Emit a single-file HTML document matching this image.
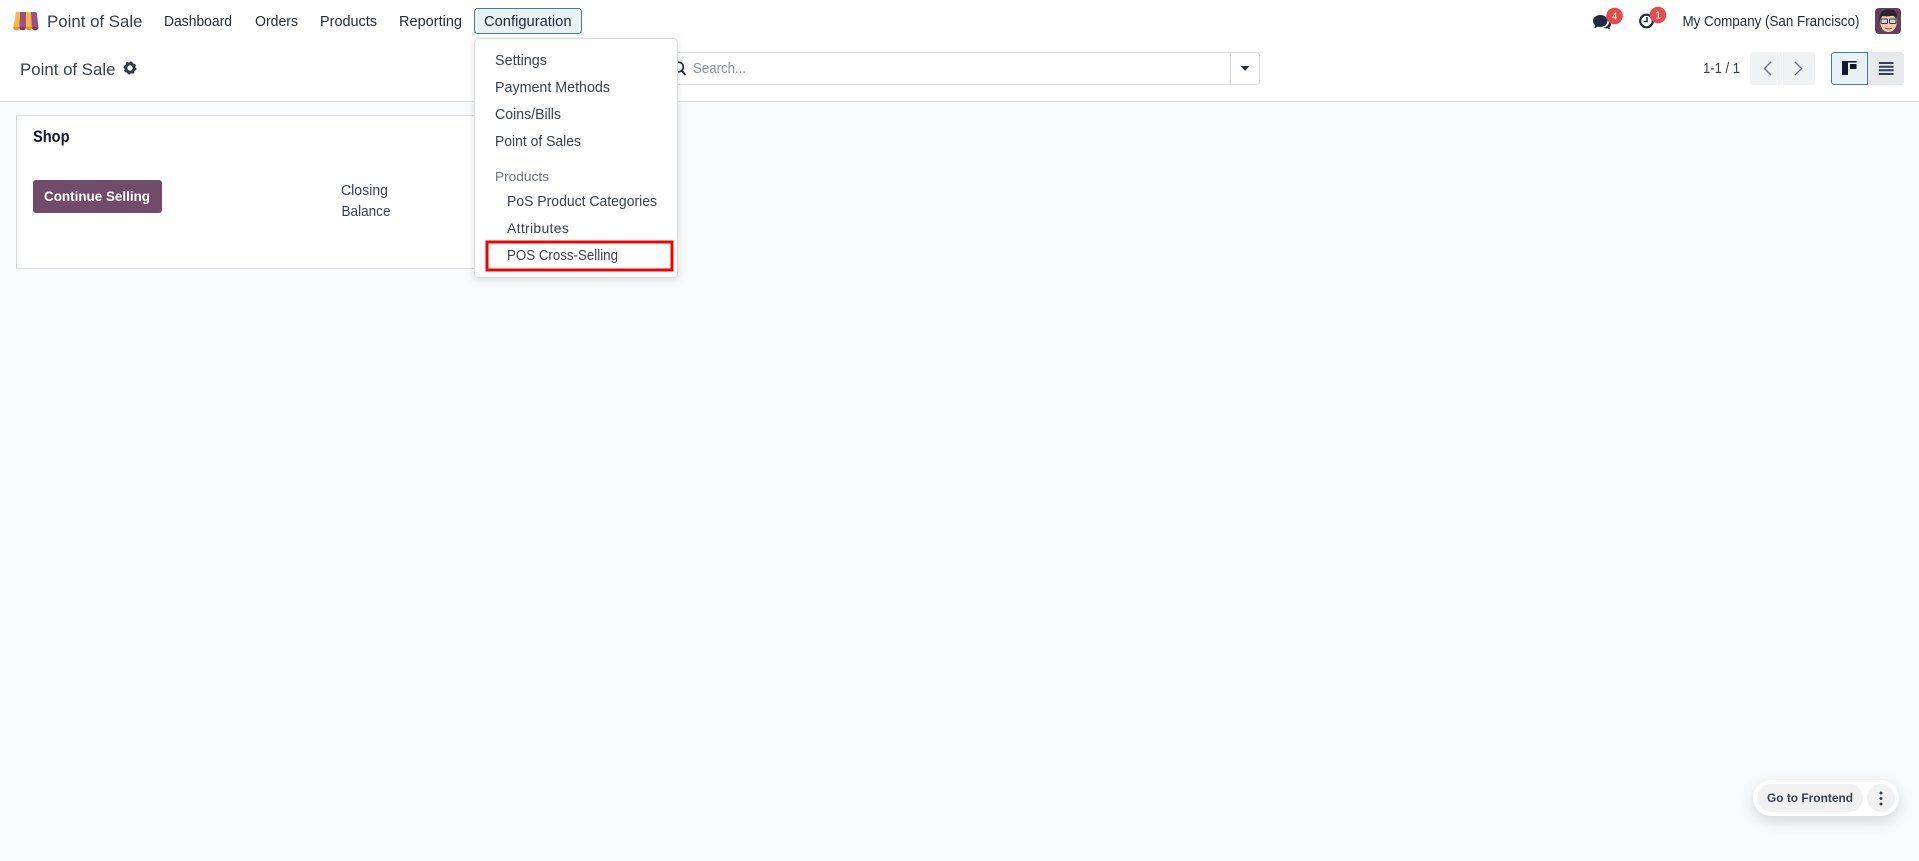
<!DOCTYPE html>
<html>
<head>
<meta charset="utf-8">
<title>Point of Sale</title>
<style>
html,body{margin:0;padding:0;width:1919px;height:861px;overflow:hidden;background:#f9fafb}
svg{display:block;position:absolute;left:0;top:0}
text{font-family:"Liberation Sans",sans-serif;font-size:14.5px;fill:#374151}
.d{fill:#1f2937}
</style>
</head>
<body>
<svg width="1919" height="861" viewBox="0 0 1919 861" xmlns="http://www.w3.org/2000/svg">
<defs>
<filter id="ms" x="-20%" y="-20%" width="140%" height="140%"><feDropShadow dx="0" dy="2" stdDeviation="4" flood-color="#000" flood-opacity=".12"/></filter>
<filter id="fs" x="-30%" y="-60%" width="160%" height="260%"><feDropShadow dx="0" dy="5" stdDeviation="7" flood-color="#000" flood-opacity=".14"/></filter>
</defs>
<rect width="1919" height="861" fill="#f9fafb"/>
<rect width="1919" height="101" fill="#fff"/>
<rect y="101" width="1919" height="1" fill="#d8dadd"/>

<!-- logo -->
<path d="M16 12h4l-.7 16H13.300z" fill="#f4b942"/>
<path d="M20 12h6v16h-6.700z" fill="#9b4f83"/>
<path d="M26 12h5l.7 16H26z" fill="#f4b942"/>
<path d="M31 12h4.500c.8 0 1.200.5 1.400 1.200L38.500 28h-6.800z" fill="#9b4f83"/>
<path d="M13.300 27h6v.5a3 2.800 0 0 1-6 0zM25.800 27h6v.5a3 2.800 0 0 1-6 0z" fill="#e98b1f"/>
<path d="M19.300 27h6.500v.5a3.200 2.800 0 0 1-6.500 0zM31.800 27h6.700v.5a3.300 2.800 0 0 1-6.700 0z" fill="#7d3a68"/>

<!-- navbar -->
<text x="47" y="27" style="font-size:17px" textLength="95.500" lengthAdjust="spacingAndGlyphs">Point of Sale</text>
<text class="d" x="164" y="26" textLength="68" lengthAdjust="spacingAndGlyphs">Dashboard</text>
<text class="d" x="255" y="26" textLength="43" lengthAdjust="spacingAndGlyphs">Orders</text>
<text class="d" x="320" y="26" textLength="57" lengthAdjust="spacingAndGlyphs">Products</text>
<text class="d" x="399" y="26" textLength="63" lengthAdjust="spacingAndGlyphs">Reporting</text>
<rect x="474.500" y="8.500" width="107" height="25" rx="3" fill="#e6f2f3" stroke="#3f8287"/>
<text class="d" x="484" y="26" textLength="87.500" lengthAdjust="spacingAndGlyphs">Configuration</text>

<!-- systray -->
<path d="M1593 21c0-3.500 3.200-6 7.300-6s7.200 2.500 7.200 6-3.200 6-7.200 6c-.9 0-1.800-.1-2.600-.4-1 .8-2.300 1.400-3.700 1.400.7-.7 1.200-1.700 1.300-2.700-1.400-1-2.300-2.500-2.300-4.300z" fill="#1f2a44"/>
<path d="M1609 20.500c1.300 1 2 2.300 2 3.700 0 1.300-.6 2.400-1.600 3.300.1.700.5 1.300 1 1.800-1.100 0-2.100-.4-2.900-1-1.500.3-3.100 0-4.300-.6 3-.2 5.800-2.600 5.800-5.700z" fill="#1f2a44"/>
<circle cx="1614.500" cy="16" r="8.300" fill="#e24c4b"/>
<text x="1614.500" y="19.500" text-anchor="middle" style="font-size:10px;fill:#fff">4</text>
<circle cx="1646.500" cy="21" r="6.300" fill="none" stroke="#1f2a44" stroke-width="2.200"/>
<path d="M1647 17v4.500h-3.500" fill="none" stroke="#1f2a44" stroke-width="1.600"/>
<circle cx="1658" cy="15" r="8.300" fill="#e24c4b"/>
<text x="1658" y="18.500" text-anchor="middle" style="font-size:10px;fill:#fff">1</text>
<text class="d" x="1682.500" y="26" textLength="177" lengthAdjust="spacingAndGlyphs">My Company (San Francisco)</text>

<!-- avatar -->
<rect x="1875" y="8" width="26" height="26" rx="4" fill="#64405c"/>
<path d="M1880 20c0 8 3.500 12 8.500 12s8.500-4 8.500-12v-4h-17z" fill="#f0c9a8"/>
<path d="M1879.500 22c-1-7 1-12 8-12.500 5-.5 9.500 1.500 9.500 6l-.5 5c-1-3-2-4.500-4-5-3 1-7 1-10 .5-1.500 1.500-2 3.500-3 6z" fill="#2c2630"/>
<rect x="1881" y="19" width="6.500" height="4.500" rx="1" fill="#cfd6d4" stroke="#3a3a3a"/>
<rect x="1889.500" y="19" width="6.500" height="4.500" rx="1" fill="#cfd6d4" stroke="#3a3a3a"/>
<path d="M1885 28c2 1.300 5 1.300 7 0" fill="none" stroke="#8a4a3a" stroke-width="1"/>

<!-- control panel -->
<text x="20" y="75" style="font-size:17px" textLength="95.500" lengthAdjust="spacingAndGlyphs">Point of Sale</text>
<circle cx="130" cy="68" r="4.200" fill="none" stroke="#2f3b4c" stroke-width="3"/>
<circle cx="130" cy="68" r="5.700" fill="none" stroke="#2f3b4c" stroke-width="1.600" stroke-dasharray="2.200 2.280"/>

<!-- search -->
<rect x="640.500" y="52.500" width="619" height="32" rx="3" fill="#fff" stroke="#d8dadd"/>
<rect x="1230" y="53" width="1" height="31" fill="#d8dadd"/>
<path d="M1240.700 66h8.800l-4.400 4.700z" fill="#1f2937"/>
<circle cx="678.500" cy="67" r="4.800" fill="none" stroke="#1f2937" stroke-width="1.600"/>
<path d="M682 71l3.500 4" stroke="#1f2937" stroke-width="1.900"/>
<text x="693" y="73" style="fill:#8b929c" textLength="53" lengthAdjust="spacingAndGlyphs">Search...</text>

<!-- pager -->
<text x="1703" y="73" textLength="37" lengthAdjust="spacingAndGlyphs">1-1 / 1</text>
<path d="M1753 52h29v33h-29a3 3 0 0 1-3-3v-27a3 3 0 0 1 3-3z" fill="#f1f2f4"/>
<path d="M1783 52h29a3 3 0 0 1 3 3v27a3 3 0 0 1-3 3h-29z" fill="#f1f2f4"/>
<path d="M1771 62l-6.500 6.500 6.500 6.500" fill="none" stroke="#6b7280" stroke-width="1.400"/>
<path d="M1795 62l6.500 6.500-6.500 6.500" fill="none" stroke="#6b7280" stroke-width="1.400"/>

<!-- view switch -->
<path d="M1867 52h34a3 3 0 0 1 3 3v27a3 3 0 0 1-3 3h-34z" fill="#e7e9ed"/>
<path d="M1834 52.500h33.500v32h-33.500a2.500 2.500 0 0 1-2.500-2.500v-27a2.500 2.500 0 0 1 2.500-2.500z" fill="#e6f2f3" stroke="#3f8287"/>
<rect x="1842" y="61" width="14.500" height="1.500" fill="#111827"/>
<rect x="1842" y="61" width="6" height="14" fill="#111827"/>
<rect x="1850" y="64" width="6.500" height="5" fill="#111827"/>
<path d="M1879 62h14.500v2h-14.500zM1879 65.700h14.500v2h-14.500zM1879 69.300h14.500v2h-14.500zM1879 73h14.500v2h-14.500z" fill="#374151"/>

<!-- card -->
<rect x="16.500" y="115.500" width="640" height="153" fill="#fff" stroke="#d8dadd"/>
<text x="33" y="142" style="font-size:16.500px;font-weight:700;fill:#111827" textLength="36.500" lengthAdjust="spacingAndGlyphs">Shop</text>
<rect x="33" y="180" width="129" height="33" rx="3" fill="#714b67"/>
<text x="44" y="201" style="font-weight:700;fill:#fff;font-size:14px" textLength="106" lengthAdjust="spacingAndGlyphs">Continue Selling</text>
<text x="341" y="195" textLength="47" lengthAdjust="spacingAndGlyphs">Closing</text>
<text x="341.500" y="216" textLength="49" lengthAdjust="spacingAndGlyphs">Balance</text>

<!-- dropdown -->
<rect x="474.500" y="38.500" width="203" height="239" rx="4" fill="#fff" stroke="#d8dadd" filter="url(#ms)"/>
<text x="495" y="65" textLength="52" lengthAdjust="spacingAndGlyphs">Settings</text>
<text x="495" y="92" textLength="115" lengthAdjust="spacingAndGlyphs">Payment Methods</text>
<text x="495" y="119" textLength="66" lengthAdjust="spacingAndGlyphs">Coins/Bills</text>
<text x="495" y="146" textLength="86" lengthAdjust="spacingAndGlyphs">Point of Sales</text>
<text x="495" y="181" style="font-size:13px;fill:#6b7280" textLength="54" lengthAdjust="spacingAndGlyphs">Products</text>
<text x="507" y="206" textLength="150" lengthAdjust="spacingAndGlyphs">PoS Product Categories</text>
<text x="507" y="233" style="font-size:14px;letter-spacing:.3px">Attributes</text>
<text x="507" y="260" textLength="111" lengthAdjust="spacingAndGlyphs">POS Cross-Selling</text>
<rect x="487" y="242" width="185" height="28" fill="none" stroke="#f00000" stroke-width="3"/>

<!-- frontend widget -->
<rect x="1753" y="780" width="146" height="36" rx="18" fill="#fff" filter="url(#fs)"/>
<rect x="1757" y="784" width="106" height="28" rx="14" fill="#f1f1f2"/>
<circle cx="1881" cy="798" r="14" fill="#f1f1f2"/>
<text x="1767" y="802" style="font-size:12px;font-weight:700" textLength="86" lengthAdjust="spacingAndGlyphs">Go to Frontend</text>
<circle cx="1881" cy="793" r="1.500" fill="#374151"/>
<circle cx="1881" cy="798.500" r="1.500" fill="#374151"/>
<circle cx="1881" cy="804" r="1.500" fill="#374151"/>
</svg>
</body>
</html>
